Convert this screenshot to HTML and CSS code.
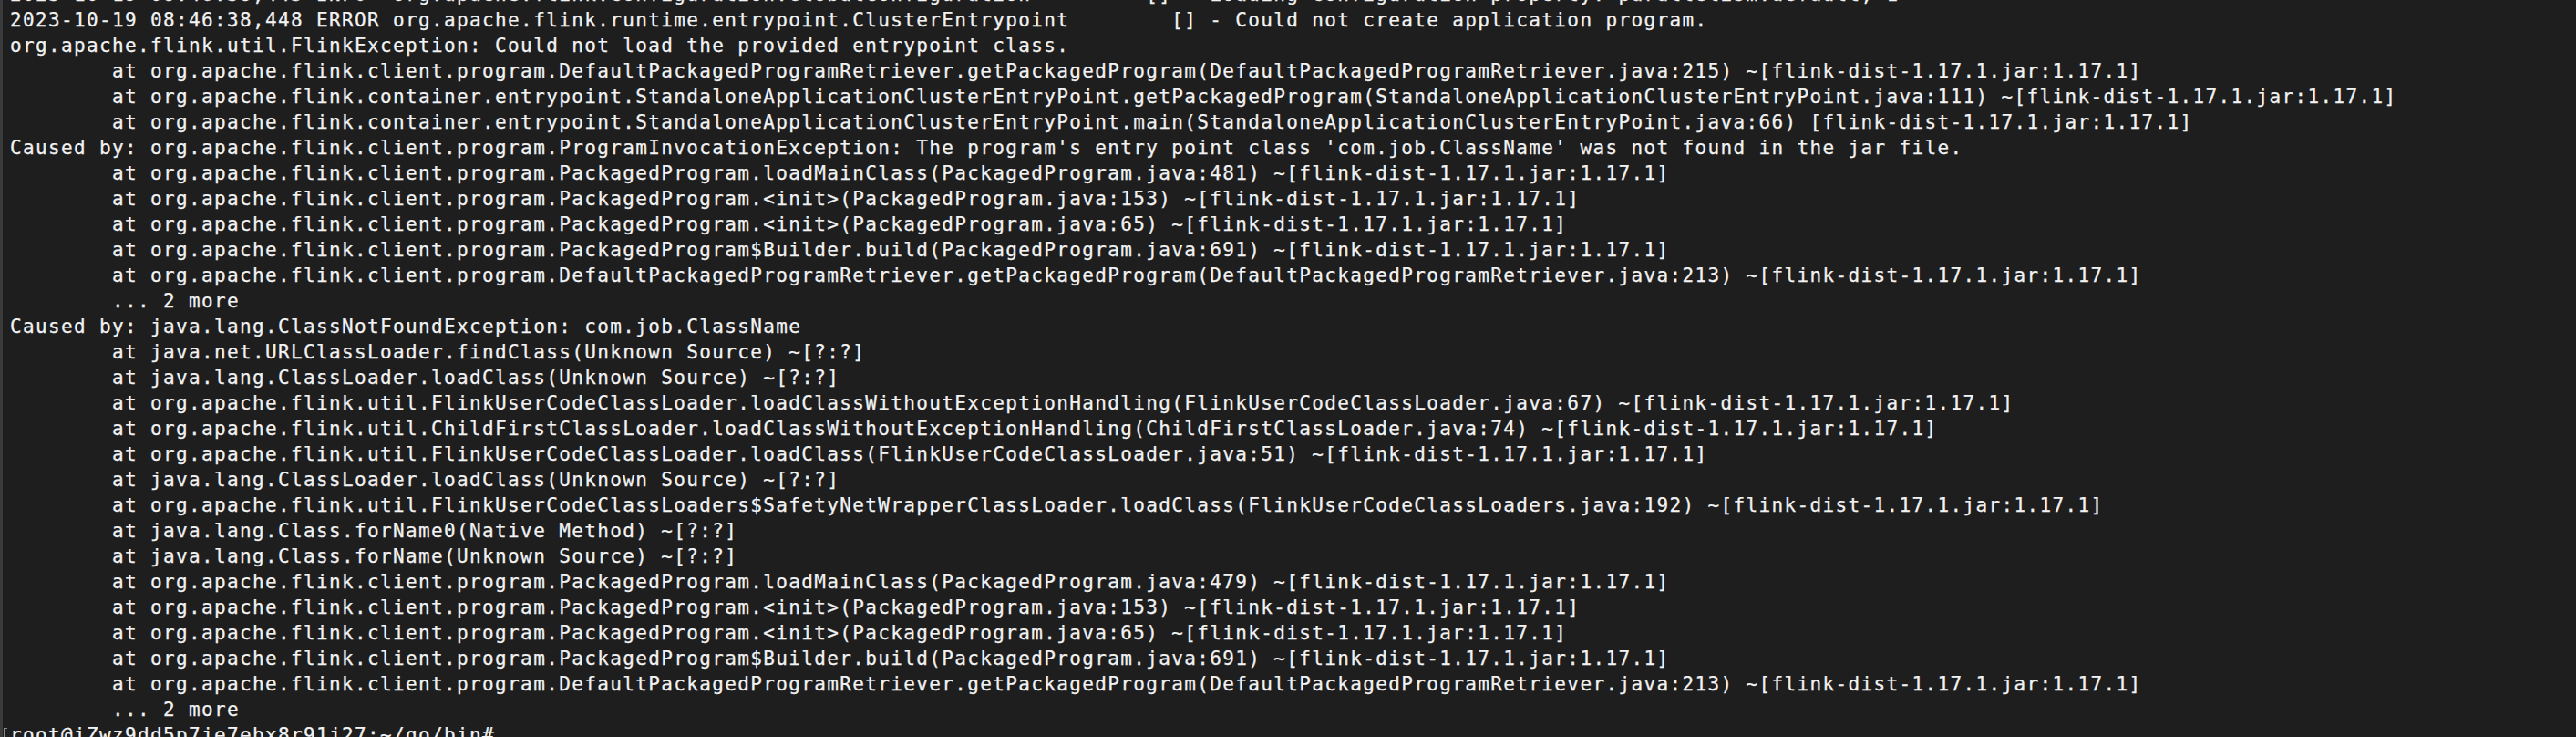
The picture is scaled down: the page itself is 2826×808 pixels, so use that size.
FILE: index.html
```html
<!DOCTYPE html>
<html lang="en">
<head>
<meta charset="utf-8">
<title>Terminal</title>
<link rel="stylesheet" href="styles.css">
</head>
<body>
<div class="terminal">
<div class="screen">
<div class="line">2023-10-19 08:46:38,445 INFO  org.apache.flink.configuration.GlobalConfiguration         [] - Loading configuration property: parallelism.default, 1</div>
<div class="line">2023-10-19 08:46:38,448 ERROR org.apache.flink.runtime.entrypoint.ClusterEntrypoint        [] - Could not create application program.</div>
<div class="line">org.apache.flink.util.FlinkException: Could not load the provided entrypoint class.</div>
<div class="line">        at org.apache.flink.client.program.DefaultPackagedProgramRetriever.getPackagedProgram(DefaultPackagedProgramRetriever.java:215) ~[flink-dist-1.17.1.jar:1.17.1]</div>
<div class="line">        at org.apache.flink.container.entrypoint.StandaloneApplicationClusterEntryPoint.getPackagedProgram(StandaloneApplicationClusterEntryPoint.java:111) ~[flink-dist-1.17.1.jar:1.17.1]</div>
<div class="line">        at org.apache.flink.container.entrypoint.StandaloneApplicationClusterEntryPoint.main(StandaloneApplicationClusterEntryPoint.java:66) [flink-dist-1.17.1.jar:1.17.1]</div>
<div class="line">Caused by: org.apache.flink.client.program.ProgramInvocationException: The program's entry point class 'com.job.ClassName' was not found in the jar file.</div>
<div class="line">        at org.apache.flink.client.program.PackagedProgram.loadMainClass(PackagedProgram.java:481) ~[flink-dist-1.17.1.jar:1.17.1]</div>
<div class="line">        at org.apache.flink.client.program.PackagedProgram.&lt;init&gt;(PackagedProgram.java:153) ~[flink-dist-1.17.1.jar:1.17.1]</div>
<div class="line">        at org.apache.flink.client.program.PackagedProgram.&lt;init&gt;(PackagedProgram.java:65) ~[flink-dist-1.17.1.jar:1.17.1]</div>
<div class="line">        at org.apache.flink.client.program.PackagedProgram$Builder.build(PackagedProgram.java:691) ~[flink-dist-1.17.1.jar:1.17.1]</div>
<div class="line">        at org.apache.flink.client.program.DefaultPackagedProgramRetriever.getPackagedProgram(DefaultPackagedProgramRetriever.java:213) ~[flink-dist-1.17.1.jar:1.17.1]</div>
<div class="line">        ... 2 more</div>
<div class="line">Caused by: java.lang.ClassNotFoundException: com.job.ClassName</div>
<div class="line">        at java.net.URLClassLoader.findClass(Unknown Source) ~[?:?]</div>
<div class="line">        at java.lang.ClassLoader.loadClass(Unknown Source) ~[?:?]</div>
<div class="line">        at org.apache.flink.util.FlinkUserCodeClassLoader.loadClassWithoutExceptionHandling(FlinkUserCodeClassLoader.java:67) ~[flink-dist-1.17.1.jar:1.17.1]</div>
<div class="line">        at org.apache.flink.util.ChildFirstClassLoader.loadClassWithoutExceptionHandling(ChildFirstClassLoader.java:74) ~[flink-dist-1.17.1.jar:1.17.1]</div>
<div class="line">        at org.apache.flink.util.FlinkUserCodeClassLoader.loadClass(FlinkUserCodeClassLoader.java:51) ~[flink-dist-1.17.1.jar:1.17.1]</div>
<div class="line">        at java.lang.ClassLoader.loadClass(Unknown Source) ~[?:?]</div>
<div class="line">        at org.apache.flink.util.FlinkUserCodeClassLoaders$SafetyNetWrapperClassLoader.loadClass(FlinkUserCodeClassLoaders.java:192) ~[flink-dist-1.17.1.jar:1.17.1]</div>
<div class="line">        at java.lang.Class.forName0(Native Method) ~[?:?]</div>
<div class="line">        at java.lang.Class.forName(Unknown Source) ~[?:?]</div>
<div class="line">        at org.apache.flink.client.program.PackagedProgram.loadMainClass(PackagedProgram.java:479) ~[flink-dist-1.17.1.jar:1.17.1]</div>
<div class="line">        at org.apache.flink.client.program.PackagedProgram.&lt;init&gt;(PackagedProgram.java:153) ~[flink-dist-1.17.1.jar:1.17.1]</div>
<div class="line">        at org.apache.flink.client.program.PackagedProgram.&lt;init&gt;(PackagedProgram.java:65) ~[flink-dist-1.17.1.jar:1.17.1]</div>
<div class="line">        at org.apache.flink.client.program.PackagedProgram$Builder.build(PackagedProgram.java:691) ~[flink-dist-1.17.1.jar:1.17.1]</div>
<div class="line">        at org.apache.flink.client.program.DefaultPackagedProgramRetriever.getPackagedProgram(DefaultPackagedProgramRetriever.java:213) ~[flink-dist-1.17.1.jar:1.17.1]</div>
<div class="line">        ... 2 more</div>
<div class="line prompt">root@iZwz9dd5p7je7ebx8r91j27:~/go/bin# </div>
</div>
</div>
</body>
</html>
```

FILE: styles.css
```css
html, body {
  margin: 0;
  padding: 0;
  background: #1e1e1e;
  height: 100%;
  overflow: hidden;
}

.terminal {
  height: 808px;
  overflow: hidden;
  background: #1e1e1e;
  border-left: 3px solid #3b3b3b;
  box-sizing: border-box;
}

.screen {
  margin-top: -20px;
  padding-left: 8px;
  font-family: "DejaVu Sans Mono", "Liberation Mono", monospace;
  font-size: 21px;
  letter-spacing: 1.36px;
  line-height: 28px;
  color: #f2f2f2;
  -webkit-text-stroke: 0.25px #f2f2f2;
}

.line {
  white-space: pre;
  height: 28px;
}

.prompt {
  position: relative;
}

.prompt::before {
  content: "";
  position: absolute;
  left: -7px;
  top: 6px;
  width: 3px;
  height: 24px;
  border-left: 1px solid #8a8a8a;
  border-top: 1px solid #8a8a8a;
}
```
